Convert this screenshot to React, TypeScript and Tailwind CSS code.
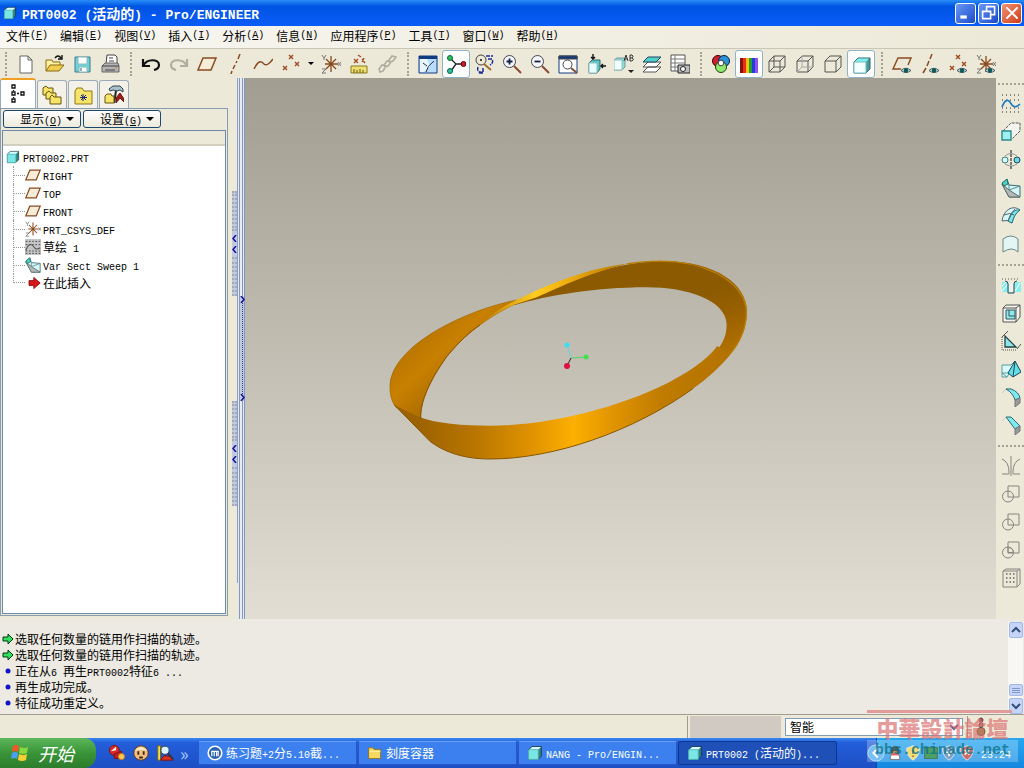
import { Fragment, type ReactNode } from 'react';
import clsx from 'clsx';

const LATIN = /([\x20-\x7e]+)/;

// Latin runs are set in the fixed-pitch face, half as wide as a Chinese character
function Txt({ children, latin = 'text-[10px]' }: { children: string; latin?: string }) {
  return (
    <>
      {children.split(LATIN).map((part, i) =>
        LATIN.test(part) ? (
          <span key={i} className={clsx("font-['Liberation_Mono',monospace] leading-none whitespace-pre", latin)}>
            {part}
          </span>
        ) : (
          <Fragment key={i}>{part}</Fragment>
        )
      )}
    </>
  );
}

function Icon({ children, className }: { children: ReactNode; className?: string }) {
  return (
    <svg viewBox="0 0 20 20" fill="none" stroke="#444" className={clsx('shrink-0', className || 'w-5 h-5')} aria-hidden="true">
      {children}
    </svg>
  );
}

const BROWN = '#8a4a20';

const eye = (
  <>
    <path d="M9 16.500q4.500-4.500 10 0q-5 4-10 0z" fill="#cfe0dc" stroke="#456" />
    <circle cx="14" cy="16.500" r="2.200" fill="#0c5a58" stroke="none" />
  </>
);

const cube = (
  <>
    <path d="M2 6l4-4h12v12l-4 4H2z" fill="#2f8080" stroke="#234" />
    <path d="M2.500 6l4-3.500h11L14 6z" fill="#d8ffff" stroke="none" />
    <path d="M2 6h12v12H2z" fill="#7ae6e6" stroke="#5bb" />
  </>
);

const folder = (
  <>
    <path d="M2 5V3.500h5L9 5.500h8V17H2z" fill="#f4d860" stroke="#8a6a10" />
    <path d="M3 8h14" stroke="#fff6b0" />
  </>
);

const csys = (
  <>
    <path d="M10 2v16M4 10h13M5 5l10 10M15 5L5 15" stroke={BROWN} strokeWidth="1.300" />
    <path d="M1 1l2 3 2-3M3 4v2M17 8l3 4M20 8l-3 4M1 15h4l-4 4h4" stroke="#777" />
  </>
);

const plane = <path d="M1 16L6 4h13l-5 12z" fill="#f6ecd8" stroke={BROWN} strokeWidth="1.500" />;
const points = (
  <path d="M8 1l4 4M12 1L8 5M14 8l4 4M18 8l-4 4M2 12l4 4M6 12l-4 4" stroke="#a04a20" strokeWidth="1.400" />
);
const glass = (
  <>
    <path d="M12 12l7 7" stroke="#8a4a30" strokeWidth="2" />
    <circle cx="7.500" cy="7.500" r="6" fill="#f4f6fa" stroke="#445" />
  </>
);
const pinned = (
  <>
    <path d="M7 2h11v11H7z" />
    <circle cx="7" cy="12.500" r="5.500" />
  </>
);
const cage = <path d="M2 7h11v11H2zM2 7l5-5h11v11l-5 5M13 7l5-5" stroke="#555" />;

const sweep = (
  <>
    <path d="M6 1l2 6 11 1v11H8L1 6z" fill="#d4f6f6" stroke="#3a6a74" />
    <path d="M1 6l7 6 11 7H8z" fill="#b4bab8" stroke="#5a6a6a" />
    <path d="M8 7v5M8 12l11-4" stroke="#5a8a90" />
    <path d="M1 5l5-4 1 5-4 2z" fill="#48d4cc" stroke="#2a6a60" />
  </>
);

const icons: Record<string, ReactNode> = {
  New: <path d="M4 2h8l4 4v13H4zM12 2v4h4" fill="#fff" stroke="#666" />,
  Open: (
    <>
      <path d="M2 17V6h6l1 2h7v3" fill="#fff2a0" stroke="#8a6a10" />
      <path d="M2 17l4-6h14l-5 6z" fill="#f0cc50" stroke="#8a6a10" />
      <path d="M11 4q3-4 6 0M18 1v4h-4" stroke="#111" strokeWidth="1.400" />
    </>
  ),
  Save: (
    <>
      <path d="M3 3h15v15H3z" fill="#6cd4d8" stroke="#478" />
      <path d="M6 3h9v7H6zM7 13h8v5H7z" fill="#fff" stroke="#8bb" />
      <path d="M9 14v3" stroke="#356" />
    </>
  ),
  Print: (
    <>
      <path d="M6 10l1-9h8l2 2v7" fill="#fff" />
      <path d="M2 12l3-3h13l1 3v6H2z" fill="#b4b4b4" stroke="#666" />
      <path d="M2 12h17M5 16h10M9 4h4M9 7h5" stroke="#444" />
      <path d="M15 14h2" stroke="#e08030" />
    </>
  ),
  Undo: <path d="M2 5v7h7M2 12C6 4 18 5 18 11q0 4-5 5" stroke="#111" strokeWidth="2.200" />,
  Redo: <path d="M18 5v7h-7M18 12C14 4 2 5 2 11q0 4 5 5" stroke="#b0aea2" strokeWidth="2.200" />,
  'Datum plane': plane,
  'Datum axis': <path d="M15 0l-2 5M12 7l-1 2M10 11l-2 4M7 17l-1 3" stroke={BROWN} strokeWidth="1.500" />,
  'Datum curve': <path d="M1 15C5 7 8 6 11 10q3 3 9-5" stroke={BROWN} strokeWidth="1.400" />,
  'Datum points': points,
  'Coordinate system': csys,
  Analysis: (
    <>
      <path d="M2 12h16v7H2z" fill="#f0e070" stroke="#8a7a20" />
      <path d="M5 15v4M8 16v3M11 15v4M14 16v3" stroke="#665a10" />
      <path d="M5 5l4 4M9 5L5 9M9 1l3 2M13 5l3 4M15 4l-2 4" stroke="#a04a20" strokeWidth="1.300" />
    </>
  ),
  Link: (
    <path d="M2 15l3-4 4 1-3 5-3 1zM7 11l3-4 4 1-3 4-3 1zM12 6l3-4 4 1-3 4-3 1z" stroke="#b0ada0" strokeWidth="1.600" />
  ),
  Repaint: (
    <>
      <path d="M1 2h18v17H1z" fill="#b8dcff" stroke="#123a80" />
      <path d="M1 2h18v3H1z" fill="#123a80" stroke="none" />
      <path d="M2 5h7l3 7-6 6H2z" fill="#e8f4ff" stroke="none" />
      <path d="M8 18q1-6 8-11M5 9l4 3" stroke="#234" />
    </>
  ),
  'Spin center': (
    <>
      <path d="M5 5l5 5-5 7M10 10h8" stroke="#222" strokeWidth="1.300" />
      <circle cx="4" cy="4" r="2.500" fill="#30c050" stroke="#064" />
      <circle cx="4" cy="17" r="2.500" fill="#30c0a0" stroke="#064" />
      <circle cx="17.500" cy="10" r="2.500" fill="#c02030" stroke="#600" />
    </>
  ),
  'Orient mode': (
    <>
      <circle cx="7" cy="6" r="5" />
      <path d="M7 5v2" strokeWidth="2" />
      <path d="M10 10l7 6" stroke="#a07030" strokeWidth="2" />
      <path d="M12 2h7M14 5h4q2 4-2 6M4 13q-2 6 5 5M9 14v5h-4" stroke="#1a2a9a" strokeWidth="1.500" strokeDasharray="4 1" />
    </>
  ),
  'Zoom in': <>{glass}<path d="M4.500 7.500h6M7.500 4.500v6" stroke="#124" strokeWidth="1.800" /></>,
  'Zoom out': <>{glass}<path d="M4.500 7.500h6" stroke="#124" strokeWidth="1.800" /></>,
  Refit: (
    <>
      <path d="M1 2h18v17H1z" fill="#fff" stroke="#123a80" />
      <path d="M1 2h18v3H1z" fill="#123a80" />
      <circle cx="9.500" cy="10.500" r="4.500" />
      <path d="M13 14l6 5" stroke="#8a4a30" strokeWidth="2" />
    </>
  ),
  Reorient: (
    <>
      <path d="M3 9l3-3h8v9l-3 4H3z" fill="#5cc" stroke="#366" />
      <path d="M3 9h8v10H3z" fill="#e8ffff" stroke="#9bb" />
      <path d="M7 0v5M5 3l2 2 2-2M20 12h-5M17 10l-2 2 2 2" stroke="#111" strokeWidth="1.400" />
    </>
  ),
  'Saved views': (
    <>
      <path d="M0 6l3-2h8v9l-3 3H0z" fill="#8dd" stroke="#799" />
      <path d="M0 6h8v10H0z" fill="#f0ffff" stroke="#9bb" />
      <path d="M10 7l2-6 2 6M11 5h2M16 7V1h2q2 1 0 3h-2M18 4q3 1 0 3h-2" stroke="#333" />
      <path d="M14 16h6l-3 3z" fill="#222" stroke="none" />
    </>
  ),
  Layers: (
    <>
      <path d="M1 18l5-5h13l-5 5zM1 13l5-5h13l-5 5z" fill="#fff" stroke="#555" />
      <path d="M1 8l5-5h13l-5 5z" fill="#50d0c8" stroke="#246" />
    </>
  ),
  'View manager': (
    <>
      <path d="M1 1h14v16H1z" fill="#fff" stroke="#555" />
      <path d="M1 5h14M1 9h14M1 13h9M5 1v16" stroke="#777" />
      <path d="M8 11h12v8H8z" fill="#bbb" stroke="#222" />
      <circle cx="13" cy="15" r="2.500" fill="#fff" stroke="#222" />
    </>
  ),
  Colors: (
    <>
      <circle cx="7" cy="7" r="5.500" fill="#d02030" stroke="#400" />
      <circle cx="13" cy="7" r="5.500" fill="#2a90d8" stroke="#024" />
      <circle cx="10" cy="13" r="5.500" fill="#90e870" stroke="#240" />
      <circle cx="10" cy="9" r="2.800" fill="#fff" stroke="#444" />
    </>
  ),
  'Color scale': (
    <g stroke="none">
      <path d="M1 4h3v15H1z" fill="#8a1010" />
      <path d="M4 4h3v15H4z" fill="#e83010" />
      <path d="M7 4h3v15H7z" fill="#f8c010" />
      <path d="M10 4h3v15h-3z" fill="#20a030" />
      <path d="M13 4h3v15h-3z" fill="#2040d8" />
      <path d="M16 4h3v15h-3z" fill="#9050f0" />
    </g>
  ),
  Wireframe: <>{cage}<path d="M7 2v11h11M7 13l-5 5" stroke="#555" /></>,
  'Hidden line': <>{cage}<path d="M7 2v11h11M7 13l-5 5" stroke="#aaa" /></>,
  'No hidden': cage,
  Shading: (
    <>
      <path d="M3 8l4-4h12v11l-4 4H3z" fill="#4a9a9a" stroke="#366" />
      <path d="M3.500 8L7 4.500h11L15 8z" fill="#7ff0f0" stroke="none" />
      <path d="M3 8h12v11H3z" fill="#f4ffff" stroke="#7bb" />
    </>
  ),
  'Show planes': <><path d="M9 15H1L6 4h13l-3 7" stroke={BROWN} strokeWidth="1.400" />{eye}</>,
  'Show axes': <><path d="M12 0l-2 5M9 7l-2 5M6 14l-3 5" stroke={BROWN} strokeWidth="1.500" />{eye}</>,
  'Show points': <>{points}{eye}</>,
  'Show csys': <>{csys}{eye}</>,
  Sketch: (
    <>
      <path d="M1 1h19M1 6h19M1 14h19M1 18h19" stroke="#222" strokeDasharray="1 3" />
      <path d="M1 13C5 3 8 6 11 11q3 4 8-1" stroke="#1878c0" strokeWidth="1.600" />
    </>
  ),
  Extrude: (
    <>
      <path d="M2 9l8-8h9v8l-8 8" fill="#f4f4ee" stroke="#555" strokeDasharray="3 1" />
      <path d="M1 9h9v9H1z" fill="#9ff0f0" stroke="#2a8a8a" strokeWidth="1.400" />
    </>
  ),
  Revolve: (
    <>
      <path d="M4 6q6-5 12 0M4 14q6 4 12 0" stroke="#999" />
      <circle cx="4" cy="10" r="3" fill="#cff" stroke="#477" />
      <circle cx="16" cy="10" r="3" fill="#6dd" stroke="#246" />
      <path d="M10 0v20" stroke="#111" strokeDasharray="3 1" />
    </>
  ),
  'Variable section sweep': sweep,
  'Boundary blend': (
    <>
      <path d="M1 15q1-8 7-12 6-3 11 1-6 4-8 13-5-4-10-2z" fill="#d8f6f6" stroke="#567" />
      <path d="M10 9q3-6 9-5-6 4-8 13l-4-2z" fill="#7fe8e8" stroke="#2a7a7a" />
      <path d="M3 9q6-3 10 0M7 15q2-8 7-12" stroke="#567" />
    </>
  ),
  Style: <path d="M2 18V5q8-6 15 0v13q-6-6-15 0z" fill="#e4f6f4" stroke="#688" />,
  Hole: (
    <>
      <path d="M1 7h5l2 2v8h5V9l2-2h5v10h-7v1H8v-1H1z" fill="#8ee" stroke="none" />
      <path d="M8 8h4v9H8z" fill="#f4f2e8" stroke="none" />
      <path d="M1 16l6-7M1 11l4-4M14 16l5-8" stroke="#fff" />
      <path d="M1 4h18" stroke="#555" strokeDasharray="1 2" />
      <path d="M4 6q3 0 3 3v9h6V9q0-3 3-3" stroke="#345" />
    </>
  ),
  Shell: (
    <>
      <path d="M2 5l3-3h14v12l-4 5H2z" fill="#f4f4ee" stroke="#555" />
      <path d="M2 5h13v14M15 5l4-3" stroke="#555" />
      <path d="M5 7h9v9H5z" fill="#8ee8f0" stroke="#355" />
      <path d="M8 7v6h6" stroke="#355" />
    </>
  ),
  Rib: (
    <>
      <path d="M1 6l6-6M16 18l4-5" stroke="#555" />
      <path d="M1 6v13h15" stroke="#555" strokeDasharray="1 1" />
      <path d="M4 5v11h11z" fill="#8fe6ea" stroke="#244" strokeWidth="1.300" />
    </>
  ),
  Draft: (
    <>
      <path d="M1 6h9l4-4-1 4-7 12H1z" fill="#d8fafa" stroke="#5a9aa0" />
      <path d="M1 14h6M6 18L1 14" stroke="#5a9aa0" />
      <path d="M14 2l6 11-8 5-5-4z" fill="#5fe0e8" stroke="#245" />
      <path d="M14 2l-2 16" stroke="#245" />
    </>
  ),
  Round: (
    <>
      <path d="M1 6L5 2h5q7 4 8 8v6l-4 3" stroke="#ccc8b8" />
      <path d="M5 2h5q8 3 9 9l-5 2Q12 6 5 2z" fill="#7fe8f0" stroke="#2a6a70" />
      <path d="M19 11v5l-5 4v-7z" fill="#999" stroke="#777" />
    </>
  ),
  Chamfer: (
    <>
      <path d="M1 6l4-4" stroke="#ccc8b8" />
      <path d="M5 2h5l9 9-5 3z" fill="#7fe8f0" stroke="#2a6a70" />
      <path d="M19 11v5l-5 4v-6z" fill="#999" stroke="#777" />
    </>
  ),
  Mirror: <path d="M10 0v20M1 3q7 3 7 13v2H1M19 3q-7 3-7 13v2h7" />,
  Merge: pinned,
  Trim: pinned,
  Project: <>{pinned}<path d="M7 7.500q5 0 5.500 5H7z" /></>,
  Pattern: (
    <>
      <path d="M2 3l3-2h14v15l-3 3H2z" />
      <path d="M5 6h9M5 10h9M5 14h9" strokeWidth="2" strokeDasharray="1.500 2" />
      <path d="M2 3h14v16M16 3l3-2" />
    </>
  ),
};

const fileTools = ['New', 'Open', 'Save', 'Print'];
const datumTools = ['Undo', 'Redo', 'Datum plane', 'Datum axis', 'Datum curve', 'Datum points'];
const extraTools = ['Coordinate system', 'Analysis', 'Link'];
const viewTools = ['Repaint', 'Spin center', 'Orient mode', 'Zoom in', 'Zoom out', 'Refit', 'Reorient', 'Saved views', 'Layers', 'View manager'];
const displayTools = ['Colors', 'Color scale', 'Wireframe', 'Hidden line', 'No hidden', 'Shading'];
const showTools = ['Show planes', 'Show axes', 'Show points', 'Show csys'];
const pressed = ['Spin center', 'Color scale', 'Shading'];

const shapeTools = ['Sketch', 'Extrude', 'Revolve', 'Variable section sweep', 'Boundary blend', 'Style'];
const engineeringTools = ['Hole', 'Shell', 'Rib', 'Draft', 'Round', 'Chamfer'];
const editTools = ['Mirror', 'Merge', 'Trim', 'Project', 'Pattern'];

const menus = [
  ['文件', 'F'],
  ['编辑', 'E'],
  ['视图', 'V'],
  ['插入', 'I'],
  ['分析', 'A'],
  ['信息', 'N'],
  ['应用程序', 'P'],
  ['工具', 'T'],
  ['窗口', 'W'],
  ['帮助', 'H'],
];

const treeRows: { label: string; icon: ReactNode }[] = [
  { label: 'RIGHT', icon: plane },
  { label: 'TOP', icon: plane },
  { label: 'FRONT', icon: plane },
  { label: 'PRT_CSYS_DEF', icon: csys },
  {
    label: '草绘 1',
    icon: (
      <>
        <path d="M0 0h20v20H0z" fill="#c4c4c4" stroke="none" />
        <path d="M1 3h18M1 7h18M1 15h18M1 18h18" stroke="#333" strokeDasharray="2 2" />
        <path d="M1 14C5 4 9 6 12 11q3 3 7 0" stroke="#555" strokeWidth="1.500" />
      </>
    ),
  },
  { label: 'Var Sect Sweep 1', icon: sweep },
  { label: '在此插入', icon: <path d="M5 7h6V3l8 7-8 7v-4H5z" fill="#d81818" stroke="#800" /> },
];

const messages = [
  { kind: 'prompt', text: '选取任何数量的链用作扫描的轨迹。' },
  { kind: 'prompt', text: '选取任何数量的链用作扫描的轨迹。' },
  { kind: 'info', text: '正在从6 再生PRT0002特征6 ...' },
  { kind: 'info', text: '再生成功完成。' },
  { kind: 'info', text: '特征成功重定义。' },
];

function Tools({ names, muted }: { names: string[]; muted?: boolean }) {
  return (
    <>
      {names.map((name) => (
        <button
          key={name}
          aria-label={name}
          className={clsx(
            'flex h-7 w-7 shrink-0 items-center justify-center rounded-[3px] border',
            pressed.includes(name) ? 'border-[#8fb4c8] bg-white' : 'border-transparent',
            muted && 'opacity-60'
          )}
        >
          <Icon>{icons[name]}</Icon>
        </button>
      ))}
    </>
  );
}

function Grip({ first }: { first?: boolean }) {
  return (
    <div className={clsx('flex h-7 shrink-0 items-center justify-center', first ? 'w-3' : 'w-[13px]')}>
      <div className="h-6 border-l-2 border-dotted border-[#a5a294]" />
    </div>
  );
}

function SideGrip({ first }: { first?: boolean }) {
  return (
    <div className={clsx('flex w-full shrink-0 items-center', first ? 'h-3' : 'h-[13px]')}>
      <div className="w-full border-t-2 border-dotted border-[#a5a294]" />
    </div>
  );
}

function WindowButton({ label, className, children }: { label: string; className: string; children: ReactNode }) {
  return (
    <button aria-label={label} className={clsx('flex h-[21px] w-[21px] items-center justify-center rounded-[3px] border border-white', className)}>
      <svg viewBox="0 0 20 20" className="h-4 w-4" fill="none" stroke="#fff" strokeWidth="2.500">{children}</svg>
    </button>
  );
}

function TitleBar() {
  return (
    <header className="flex h-[26px] shrink-0 items-center bg-linear-to-b from-[#2a8cf8] via-[#0054e3] via-25% to-[#0a5cf8] pr-0.5 pl-[3px]">
      <Icon className="w-3.5 h-3.5">{cube}</Icon>
      <h1 className="ml-[5px] flex-1 truncate text-[14px] leading-5 font-bold text-white">
        <Txt latin="text-[13px]">PRT0002 (活动的) - Pro/ENGINEER</Txt>
      </h1>
      <div className="flex gap-0.5">
        <WindowButton label="Minimize" className="bg-linear-to-br from-[#6a98f8] to-[#1c48c8]">
          <path d="M3 15h8" strokeWidth="4" />
        </WindowButton>
        <WindowButton label="Restore" className="bg-linear-to-br from-[#6a98f8] to-[#1c48c8]">
          <path d="M2 8h10v9H2zM7 7V2h10v10h-5" strokeWidth="2" />
        </WindowButton>
        <WindowButton label="Close" className="bg-linear-to-br from-[#f09070] to-[#d03810]">
          <path d="M3 3l14 14M17 3L3 17" />
        </WindowButton>
      </div>
    </header>
  );
}

function MenuBar() {
  return (
    <nav className="flex h-[23px] shrink-0 items-start gap-3 border-b border-[#c9c6b8] bg-linear-to-r from-[#f8f7f2] to-[#ece9d8] pl-1.5">
      {menus.map(([name, key]) => (
        <button key={name} className="flex h-5 items-center leading-5 whitespace-nowrap">
          {name}
          <span className="font-['Liberation_Mono',monospace] text-[10px]">
            (<u>{key}</u>)
          </span>
        </button>
      ))}
    </nav>
  );
}

function ToolBar() {
  return (
    <div className="flex h-[29px] shrink-0 items-center overflow-hidden">
      <Grip first />
      <Tools names={fileTools} />
      <Grip />
      <Tools names={datumTools} />
      <button aria-label="More datum points" className="flex h-7 w-3 items-center justify-center">
        <svg viewBox="0 0 6 4" className="h-1 w-1.5"><path d="M0 0h6L3 3z" /></svg>
      </button>
      <Tools names={extraTools} />
      <Grip />
      <Tools names={viewTools} />
      <Grip />
      <Tools names={displayTools} />
      <Grip />
      <Tools names={showTools} />
    </div>
  );
}

function NavTab({ label, active, children }: { label: string; active?: boolean; children: ReactNode }) {
  return (
    <button
      role="tab"
      aria-selected={!!active}
      aria-label={label}
      className={clsx(
        'flex items-center justify-center rounded-t-[3px] border border-b-0 border-[#9aacbc]',
        active ? 'h-[30px] w-9 border-t-2 border-t-[#f0a020] bg-white' : 'h-7 w-[30px] bg-[#f4f2e8]'
      )}
    >
      <Icon>{children}</Icon>
    </button>
  );
}

function DropButton({ label, hotkey }: { label: string; hotkey: string }) {
  return (
    <button className="flex h-[18px] w-[78px] items-center justify-end gap-1 rounded-[3px] border border-[#1c4870] bg-linear-to-b from-white to-[#ece9dc] pr-1.5 leading-4">
      <span>
        {label}
        <span className="font-['Liberation_Mono',monospace] text-[10px] leading-none">
          (<u>{hotkey}</u>)
        </span>
      </span>
      <svg viewBox="0 0 8 4" className="h-1 w-2"><path d="M0 0h8L4 4z" /></svg>
    </button>
  );
}

function ModelTree() {
  return (
    <aside className="flex w-[228px] shrink-0 flex-col">
      <div role="tablist" className="flex h-[30px] shrink-0 items-end gap-px">
        <NavTab label="Model tree" active>
          <path d="M4 1h3v3H4zM4 8h3v3H4zM4 15h3v3H4zM13 8h3v3h-3zM9 9.500h2M5.500 6v1M5.500 13v1" stroke="#111" strokeWidth="1.300" />
        </NavTab>
        <NavTab label="Folder browser">
          <path d="M1 3l3-2 2 2h5v7H1z" fill="#f6e468" stroke="#665510" />
          <path d="M4 8l3-2 2 2h5v6H4z" fill="#f6e468" stroke="#665510" />
          <path d="M8 12l2-2 2 2h7v7H8z" fill="#f6e468" stroke="#665510" />
        </NavTab>
        <NavTab label="Favorites">
          <path d="M2 6l2-3h5l2 3h8v13H2z" fill="#f6e468" stroke="#887720" />
          <path d="M10 9v7M7 12.500h7M8 10l5 5M13 10l-5 5" stroke="#1a2a80" />
        </NavTab>
        <NavTab label="Connections">
          <path d="M5 4l4-3h7l3 3v3l-3-2-3 1-4-1-3 1z" fill="#a8c4c8" stroke="#345" />
          <path d="M12 6l-2 12" stroke="#223" strokeWidth="2" />
          <path d="M1 11l2-2h4l1 2h2v7H1z" fill="#f6e468" stroke="#665510" />
          <path d="M12 13l4-5 4 6v3l-4-4-4 5z" fill="#a02018" stroke="#611" />
        </NavTab>
      </div>
      <div className="mb-[3px] flex min-h-0 flex-1 flex-col border border-[#8a9cb0] p-px">
        <div className="flex h-5 shrink-0 gap-0.5 pl-px">
          <DropButton label="显示" hotkey="O" />
          <DropButton label="设置" hotkey="G" />
        </div>
        <div className="flex min-h-0 flex-1 flex-col border border-[#6d8aa8]">
          <div className="h-[15px] shrink-0 border-b-2 border-[#d3cfbf] bg-[#ece9d8]" />
          <div className="flex-1 bg-white pt-0.5">
            <div className="flex h-[18px] items-center gap-[3px] pl-[3px]">
              <Icon className="w-3.5 h-3.5">{cube}</Icon>
              <span className="leading-[18px]"><Txt>PRT0002.PRT</Txt></span>
            </div>
            <ul>
              {treeRows.map((row, i) => (
                <li key={row.label} className="flex h-[18px] items-center pl-2.5">
                  <span
                    className={clsx(
                      'flex w-3 items-center border-l border-dotted border-[#999]',
                      i === treeRows.length - 1 ? 'h-[9px] self-start' : 'h-[18px]'
                    )}
                  >
                    <span className={clsx('w-full border-t border-dotted border-[#999]', i === treeRows.length - 1 && 'self-end')} />
                  </span>
                  <Icon className="w-4 h-4">{row.icon}</Icon>
                  <span className="ml-0.5 leading-[18px] whitespace-nowrap"><Txt>{row.label}</Txt></span>
                </li>
              ))}
            </ul>
          </div>
        </div>
      </div>
    </aside>
  );
}

function SashButton({ label, left }: { label: string; left?: boolean }) {
  return (
    <button
      aria-label={label}
      className={clsx(
        'flex h-[105px] w-full shrink-0 flex-col items-center bg-[#c2cae0]',
        left ? 'justify-center gap-1' : 'justify-between'
      )}
    >
      {left && <span className="w-full flex-1 border-x-2 border-dotted border-[#a4a8b4]" />}
      <svg viewBox="0 0 5 7" className="h-[7px] w-[5px]" fill="none" stroke="#10109a" strokeWidth="1.500">
        <path d={left ? 'M4 0L1 3.500l3 3.500' : 'M1 0l3 3.500L1 7'} />
      </svg>
      {!left && <span className="flex-1 border-l border-dotted border-[#2a3a90]" />}
      <svg viewBox="0 0 5 7" className="h-[7px] w-[5px]" fill="none" stroke="#10109a" strokeWidth="1.500">
        <path d={left ? 'M4 0L1 3.500l3 3.500' : 'M1 0l3 3.500L1 7'} />
      </svg>
      {left && <span className="w-full flex-1 border-x-2 border-dotted border-[#a4a8b4]" />}
    </button>
  );
}

function Sash() {
  return (
    <div className="flex w-[17px] shrink-0 pl-1">
      <div className="flex w-[5px] flex-col items-center justify-center gap-[105px]">
        <SashButton label="Collapse navigator" left />
        <SashButton label="Collapse browser" left />
      </div>
      <div className="mr-px mb-9 w-px bg-[#8a9fd0]" />
      <div className="flex w-1.5 flex-col items-center border-x border-[#7f96cc] bg-[#e8ebf2]">
        <div className="w-px flex-1 bg-[#7f96cc]" />
        <SashButton label="Expand browser" />
        <div className="w-px flex-1 bg-[#7f96cc]" />
      </div>
    </div>
  );
}

function Viewport() {
  return (
    <main className="min-w-0 flex-1 bg-linear-to-b from-[#a19d91] to-[#e2ded3]">
      <svg viewBox="245 78 751 541" className="h-full w-full" role="img" aria-label="Var Sect Sweep 1">
        <defs>
          <linearGradient id="front" gradientUnits="userSpaceOnUse" x1="110" y1="0" x2="1090" y2="0">
            <stop offset="0" stopColor="#9c6200" />
            <stop offset=".18" stopColor="#b97600" />
            <stop offset=".36" stopColor="#e29400" />
            <stop offset=".48" stopColor="#fcb000" />
            <stop offset=".6" stopColor="#e09400" />
            <stop offset=".75" stopColor="#c07c00" />
            <stop offset="1" stopColor="#b07000" />
          </linearGradient>
          <linearGradient id="left" gradientUnits="userSpaceOnUse" x1="60" y1="300" x2="180" y2="430">
            <stop offset="0" stopColor="#b87400" />
            <stop offset=".5" stopColor="#c88000" />
            <stop offset="1" stopColor="#b07000" />
          </linearGradient>
          <linearGradient id="back" gradientUnits="userSpaceOnUse" x1="1000" y1="120" x2="1060" y2="310">
            <stop offset="0" stopColor="#8c5a00" />
            <stop offset=".4" stopColor="#986000" />
            <stop offset="1" stopColor="#b37200" />
          </linearGradient>
          <linearGradient id="twist" gradientUnits="userSpaceOnUse" x1="280" y1="0" x2="740" y2="0">
            <stop offset="0" stopColor="#b47200" />
            <stop offset=".4" stopColor="#ffcc20" />
            <stop offset=".6" stopColor="#f0b010" />
            <stop offset="1" stopColor="#b47600" />
          </linearGradient>
        </defs>
        <g transform="translate(380 250) scale(.33333)">
          <path
            d="M122 506C120 455 150 390 200 320C240 272 270 246 300 225C330 203 365 180 410 160L410 150C250 182 30 290 30 410C30 435 35 455 48 472z"
            fill="url(#left)"
            stroke="#a06400"
            strokeWidth="2"
          />
          <path
            d="M390 163C500 110 690 34 850 34C1010 34 1101 105 1101 185C1101 240 1075 285 1050 314C1020 350 985 382 940 415L880 390C970 345 1040 300 1040 225C1040 150 920 112 800 112C640 112 500 138 405 165z"
            fill="url(#back)"
          />
          <path
            d="M44 466L110 498C170 522 250 527 330 527C520 527 740 465 880 390C950 352 990 318 1012 288L1050 314C1020 350 985 382 940 415C760 545 520 627 330 627C240 627 185 600 150 574z"
            fill="url(#front)"
          />
          <path d="M44 466L150 574C185 600 240 627 330 627C520 627 760 545 940 415" stroke="#865400" strokeWidth="3" fill="none" />
          <path d="M300 225C330 195 370 167 430 140C540 87 650 50 740 42C640 65 540 110 470 142L400 165C365 180 330 203 300 225z" fill="url(#twist)" />
          <path d="M740 42C970 5 1099 100 1099 185C1099 240 1073 285 1048 314" stroke="#bc7c00" strokeWidth="4" fill="none" />
          <path d="M122 506C120 455 150 390 200 320C240 272 270 246 300 225" stroke="#8a5600" strokeWidth="3" fill="none" />
        </g>
        <path d="M571 358l-4 -13" stroke="#60d8e8" />
        <path d="M571 358l15 -1" stroke="#50d860" />
        <path d="M571 358l-4 8" stroke="#501020" />
        <circle cx="567" cy="345" r="2.500" fill="#38e0f0" />
        <circle cx="586" cy="357" r="2.500" fill="#40e050" />
        <circle cx="567" cy="366" r="3" fill="#e01040" />
      </svg>
    </main>
  );
}

function FeatureBar() {
  return (
    <div className="flex w-7 shrink-0 flex-col items-center overflow-hidden pl-0.5">
      <SideGrip first />
      <Tools names={shapeTools} />
      <SideGrip />
      <Tools names={engineeringTools} />
      <SideGrip />
      <Tools names={editTools} muted />
    </div>
  );
}

function ScrollButton({ label, d }: { label: string; d: string }) {
  return (
    <button aria-label={label} className="flex h-4 w-3.5 items-center justify-center rounded-[2px] border border-[#a4b8e8] bg-[#c6d4fa]">
      <svg viewBox="0 0 10 10" className="h-2.5 w-2.5" fill="none" stroke="#33507a" strokeWidth="2"><path d={d} /></svg>
    </button>
  );
}

function MessageArea() {
  return (
    <section className="flex h-[95px] shrink-0 bg-[#eceae2]">
      <ul className="flex-1 pt-3 leading-4">
        {messages.map((m, i) => (
          <li key={i} className="flex h-4 items-center">
            <span className="flex w-[15px] shrink-0 justify-center">
              <svg viewBox="0 0 12 12" className="h-3 w-3">
                {m.kind === 'prompt' ? (
                  <path d="M1 4h5V1l5 5-5 5V8H1z" fill="#30e060" stroke="#043810" />
                ) : (
                  <circle cx="6" cy="6" r="2.500" fill="#1414c8" />
                )}
              </svg>
            </span>
            <span><Txt>{m.text}</Txt></span>
          </li>
        ))}
      </ul>
      <div className="mt-[3px] mr-px flex w-[15px] flex-col items-center bg-[#f8f7f3]">
        <ScrollButton label="Scroll up" d="M1 7l4-4 4 4" />
        <div className="flex-1" />
        <div className="mb-0.5 flex h-3 w-3.5 flex-col items-center justify-center gap-px rounded-[2px] border border-[#a4b8e8] bg-[#c6d4fa]">
          <span className="h-px w-2 bg-[#7f98d0]" />
          <span className="h-px w-2 bg-[#7f98d0]" />
          <span className="h-px w-2 bg-[#7f98d0]" />
        </div>
        <ScrollButton label="Scroll down" d="M1 3l4 4 4-4" />
      </div>
    </section>
  );
}

function StatusBar() {
  return (
    <div className="flex h-6 shrink-0 items-stretch border-t border-[#a09c90] pt-px">
      <div className="flex-1 border-r border-[#a09c90]" />
      <div className="ml-0.5 w-[91px] bg-[#d0cac2]" />
      <div className="relative my-0.5 ml-1 w-[178px]">
        <select aria-label="选取过滤器" className="h-full w-full appearance-none border border-[#7f9db9] bg-white pl-1 leading-4">
          <option>智能</option>
        </select>
        <svg viewBox="0 0 10 10" className="pointer-events-none absolute top-1 right-1 h-2.5 w-2.5" fill="none" stroke="#4a5a90" strokeWidth="2">
          <path d="M1 3l4 4 4-4" />
        </svg>
      </div>
      <div className="ml-1 flex w-[57px] items-center border-l border-[#a09c90] pl-2">
        <svg viewBox="0 0 10 20" className="h-5 w-2.5" stroke="#444">
          <circle cx="5" cy="3" r="2" fill="#c05050" />
          <circle cx="5" cy="8" r="2" fill="#b09040" />
          <circle cx="5" cy="14.500" r="4" fill="#809030" />
        </svg>
      </div>
    </div>
  );
}

function Task({ icon, label, active }: { icon: ReactNode; label: string; active?: boolean }) {
  return (
    <button
      className={clsx(
        'flex h-6 max-w-[159px] min-w-0 flex-1 items-center gap-[3px] rounded-[2px] border pl-2 text-white',
        active ? 'border-[#0c3890] bg-[#1e50b8]' : 'border-[#2858c8] border-t-[#68a0f8] bg-[#3c80f0]'
      )}
    >
      <Icon className="w-4 h-4">{icon}</Icon>
      <span className="truncate leading-5"><Txt>{label}</Txt></span>
    </button>
  );
}

function TaskBar() {
  return (
    <footer className="flex h-[30px] shrink-0 items-center bg-linear-to-b from-[#3a88f0] via-[#245edb] via-15% to-[#1d4fc4]">
      <button className="flex h-full w-24 items-center gap-2 rounded-r-xl bg-linear-to-b from-[#5cb85a] via-[#3a9438] to-[#2c7c2c] pl-2.5 text-white">
        <svg viewBox="0 0 20 20" className="h-5 w-5">
          <path d="M3 3q3-2 6 0L8 9Q5 7 2 9z" fill="#f05828" />
          <path d="M10 4q4 2 8 0l-1 6q-4 2-8 0z" fill="#88d840" />
          <path d="M2 10q3-2 6 0l-1 6q-3-2-6 0z" fill="#48a0f8" />
          <path d="M9 11q4 2 8 0l-1 6q-4 2-8 0z" fill="#f8d030" />
        </svg>
        <span className="text-[18px] leading-6 italic">开始</span>
      </button>
      <div className="flex w-[102px] items-center gap-1.5 pl-3 text-white">
        <button aria-label="Media player">
          <Icon className="w-[18px] h-[18px]">
            <circle cx="7" cy="7" r="5.500" fill="#d82828" stroke="#801010" />
            <path d="M3 8l6-5v4z" fill="#fff" stroke="none" />
            <path d="M7 11l8-3v8H7z" fill="#c02020" stroke="#801010" />
            <circle cx="15" cy="14" r="3.500" fill="#f8c850" stroke="#c07020" />
          </Icon>
        </button>
        <button aria-label="Messenger">
          <Icon className="w-[18px] h-[18px]">
            <circle cx="10" cy="10" r="8" fill="#f0c080" stroke="#603010" />
            <path d="M3 8q7-9 14 0q-7-3-14 0z" fill="#fff0d0" stroke="none" />
            <path d="M7 8v4M13 8v4M8 15h4" stroke="#402010" strokeWidth="2" />
          </Icon>
        </button>
        <button aria-label="Search">
          <Icon className="w-[18px] h-[18px]">
            <path d="M2 2h3v16H2z" fill="#f8e040" stroke="#806010" />
            <path d="M5 18l4-5 7 1 3 4z" fill="#e03020" stroke="#801010" />
            <circle cx="10" cy="7" r="4.500" fill="#d8f4ff" stroke="#345" />
            <path d="M13 10l6 7" stroke="#333" strokeWidth="2" />
          </Icon>
        </button>
        <span className="text-[18px] leading-4 text-[#a8ccff]">»</span>
      </div>
      <div className="flex min-w-0 flex-1 gap-px">
        <Task
          label="练习题+2分5.10截..."
          icon={
            <>
              <circle cx="10" cy="10" r="8.500" fill="#2a60b0" stroke="#fff" strokeWidth="2" />
              <path d="M6 14V8h3v6M9 8h3v6M12 8h2v6" stroke="#fff" strokeWidth="1.500" />
            </>
          }
        />
        <Task label="刻度容器" icon={folder} />
        <Task label="NANG - Pro/ENGIN..." icon={cube} />
        <Task label="PRT0002 (活动的)..." icon={cube} active />
      </div>
      <div className="flex h-full w-[148px] shrink-0 items-center gap-0.5 border-l border-[#1048a0] bg-linear-to-b from-[#28a8f0] to-[#1488e0] text-white">
        <button aria-label="Show hidden icons" className="-ml-2.5">
          <Icon className="w-[18px] h-[18px]">
            <circle cx="10" cy="10" r="9" fill="#48a8f0" stroke="#a8d8ff" />
            <path d="M12 5l-5 5 5 5" stroke="#fff" strokeWidth="2" />
          </Icon>
        </button>
        <Icon className="w-4 h-4">
          <circle cx="10" cy="7" r="5" fill="#222" stroke="#111" />
          <path d="M4 18q0-8 6-8t6 8z" fill="#fff" stroke="#333" />
          <path d="M5 10h10v3H5z" fill="#d03020" stroke="none" />
          <path d="M8 8h4v2H8z" fill="#f8b020" stroke="none" />
        </Icon>
        <Icon className="w-4 h-4">
          <path d="M10 1l8 3q0 10-8 15Q2 14 2 4z" fill="#f0d040" stroke="#eee" />
          <path d="M10 6v5M10 13v2" stroke="#554400" strokeWidth="2" />
        </Icon>
        <Icon className="w-4 h-4">
          <path d="M2 3h16v14H2z" fill="#108030" stroke="#064018" />
        </Icon>
        <Icon className="w-4 h-4">
          <path d="M10 1l8 3q0 10-8 15Q2 14 2 4z" fill="#5080b0" stroke="#eee" />
          <path d="M10 5v9M6 9h8" stroke="#fff" strokeWidth="2" />
        </Icon>
        <Icon className="w-4 h-4">
          <path d="M10 1l8 3q0 10-8 15Q2 14 2 4z" fill="#c03830" stroke="#eee" />
          <path d="M7 6l6 6M13 6l-6 6" stroke="#fff" strokeWidth="2" />
        </Icon>
        <time className="ml-1"><Txt>23:24</Txt></time>
      </div>
    </footer>
  );
}

function ForumMark() {
  return (
    <div className="pointer-events-none absolute right-1.5 bottom-1.5 w-[151px]">
      <div className="mr-1.5 h-[3px] bg-[#e09a98]" />
      <div className="flex h-[27px] items-center justify-center text-[22px] leading-6 font-black text-[#dc7070]/70">中華設計論壇</div>
      <div className="flex h-[22px] items-center justify-center bg-white/25 font-['Liberation_Mono',monospace] text-[15px] leading-5 font-bold text-[#0c7488]/80">
        bbs.chinade.net
      </div>
    </div>
  );
}

export default function App() {
  return (
    <div className="relative flex h-screen flex-col overflow-hidden bg-[#ece9d8] font-['Noto_Sans_CJK_SC',sans-serif] text-[12px] text-black">
      <TitleBar />
      <MenuBar />
      <ToolBar />
      <div className="flex min-h-0 flex-1">
        <ModelTree />
        <Sash />
        <Viewport />
        <FeatureBar />
      </div>
      <MessageArea />
      <StatusBar />
      <TaskBar />
      <ForumMark />
    </div>
  );
}
